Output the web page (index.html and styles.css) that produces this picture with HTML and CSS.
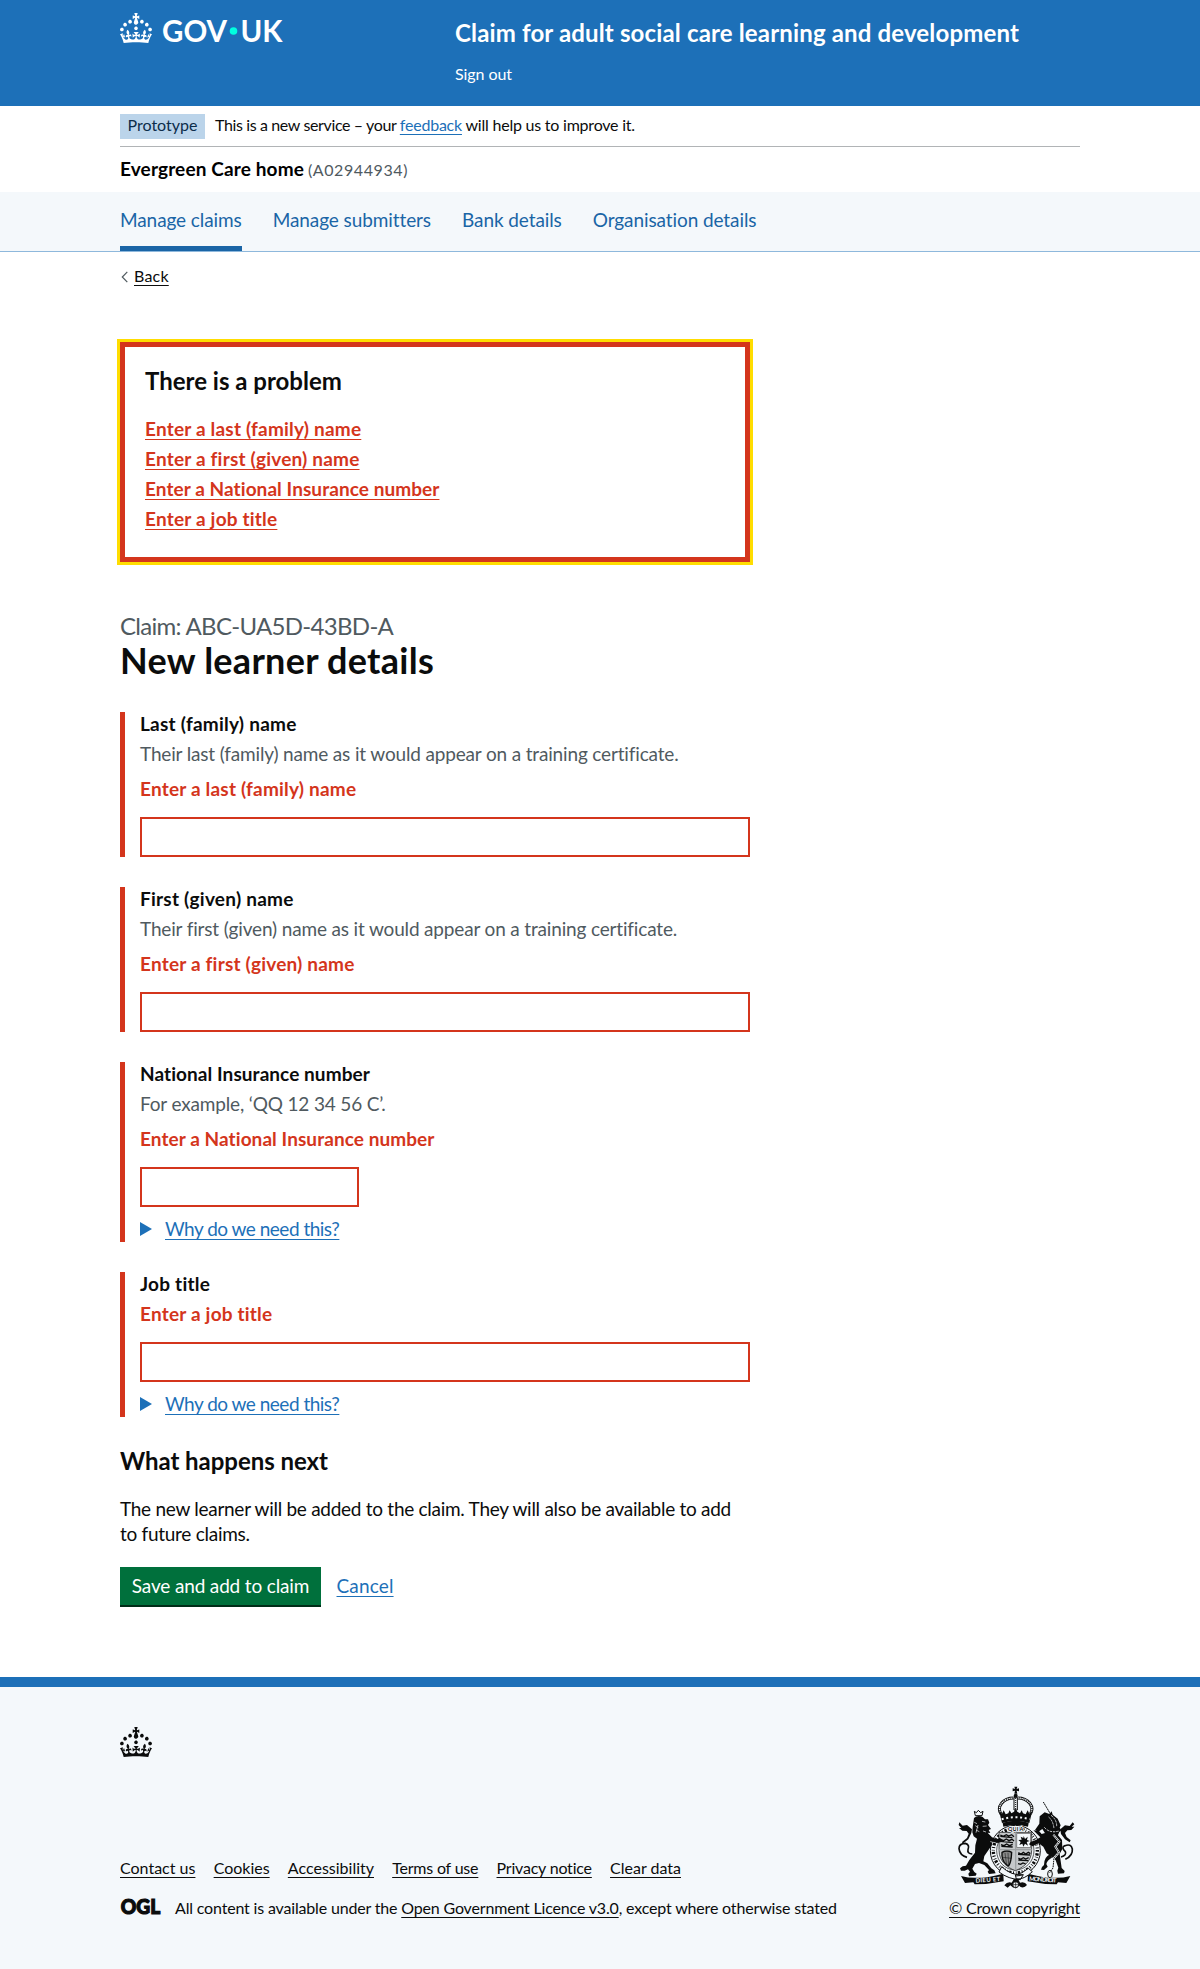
FILE: index.html
```html
<!DOCTYPE html>
<html lang="en">
<head>
<meta charset="utf-8">
<title>New learner details</title>
<link rel="stylesheet" href="styles.css">
</head>
<body>
<svg class="sprite" aria-hidden="true">
  <symbol id="crown" viewBox="0 0 32 30"><path fill-rule="evenodd" d="M22.6 10.4c-1 .4-2-.1-2.4-1-.4-.9.1-2 1-2.4.9-.4 2 .1 2.4 1s-.1 2-1 2.4m-5.9 6.7c-.9.4-2-.1-2.4-1-.4-.9.1-2 1-2.4.9-.4 2 .1 2.4 1s-.1 2-1 2.4m10.8-3.7c-1 .4-2-.1-2.4-1-.4-.9.1-2 1-2.4.9-.4 2 .1 2.4 1s0 2-1 2.4m3.3 4.8c-1 .4-2-.1-2.4-1-.4-.9.1-2 1-2.4.9-.4 2 .1 2.4 1s-.1 2-1 2.4M17 4.7l2.3 1.2V2.5l-2.3.7-.2-.2.9-3h-3.4l.9 3-.2.2c-.1.1-2.3-.7-2.3-.7v3.4L15 4.7c.1.1.1.2.2.2l-1.3 4c-.1.2-.1.4-.1.6 0 1.1.8 2 1.9 2.2h.7c1-.2 1.9-1.1 1.9-2.1 0-.2 0-.4-.1-.6l-1.3-4c-.1-.2 0-.2.1-.3m-7.6 5.7c.9.4 2-.1 2.4-1 .4-.9-.1-2-1-2.4-.9-.4-2 .1-2.4 1s0 2 1 2.4m-5 3c.9.4 2-.1 2.4-1 .4-.9-.1-2-1-2.4-.9-.4-2 .1-2.4 1s.1 2 1 2.4m-3.2 4.8c.9.4 2-.1 2.4-1 .4-.9-.1-2-1-2.4-.9-.4-2 .1-2.4 1s0 2 1 2.4m14.8 11c4.4 0 8.6.3 12.3.8 1.1-4.5 2.4-7 3.7-8.8l-2.5-.9c.2 1.3.3 1.9 0 2.7-.4-.4-.8-1.1-1.1-2.3l-1.2 4c.7-.5 1.3-.8 2-.9-1.1 2.5-2.6 3.1-3.5 3-1.1-.2-1.7-1.2-1.5-2.1.3-1.2 1.5-1.5 2.1-.1 1.1-2.3-.8-3-2-2.3 1.9-1.9 2.1-3.5.6-5.6-2.1 1.6-2.1 3.2-1.2 5.5-1.2-1.4-3.2-.6-2.5 1.6.9-1.4 2.1-.5 1.9.8-.2 1.1-1.7 2.1-3.5 1.9-2.7-.2-2.9-2.1-2.9-3.6.7-.1 1.9.5 2.9 1.9l.4-4.3c-1.1 1.1-2.1 1.4-3.2 1.4.4-1.2 2.1-3 2.1-3h-5.4s1.7 1.9 2.1 3c-1.1 0-2.1-.2-3.2-1.4l.4 4.3c1-1.4 2.2-2 2.9-1.9-.1 1.5-.2 3.4-2.9 3.6-1.9.2-3.4-.8-3.5-1.9-.2-1.3 1-2.2 1.9-.8.7-2.3-1.2-3-2.5-1.6.9-2.2.9-3.9-1.2-5.5-1.5 2-1.3 3.7.6 5.6-1.2-.7-3.1 0-2 2.3.6-1.4 1.8-1.1 2.1.1.2.9-.3 1.9-1.5 2.1-.9.2-2.4-.5-3.5-3 .6 0 1.2.3 2 .9l-1.2-4c-.3 1.1-.7 1.9-1.1 2.3-.3-.8-.2-1.4 0-2.7l-2.9.9C1.3 23 2.6 25.5 3.7 30c3.7-.5 7.9-.8 12.3-.8"/></symbol>
</svg>

<header class="header">
  <div class="container header-row">
    <a class="logo" href="#" aria-label="GOV.UK">
      <svg width="164" height="36" viewBox="0 0 164 36">
        <use href="#crown" width="32" height="30" fill="#fff"/>
        <text class="logo-text" x="42" y="29" textLength="65" lengthAdjust="spacingAndGlyphs">GOV</text>
        <circle cx="113.5" cy="18" r="3.8" fill="#00ffe0"/>
        <text class="logo-text" x="120.5" y="29" textLength="42" lengthAdjust="spacingAndGlyphs">UK</text>
      </svg>
    </a>
    <div class="header-content">
      <a class="service-name" href="#">Claim for adult social care learning and development</a>
      <a class="sign-out" href="#">Sign out</a>
    </div>
  </div>
</header>

<div class="container phase">
  <strong class="tag">Prototype</strong>
  <span class="phase-text"><span class="phase-lead">This is a new service – your </span><a class="link" href="#">feedback</a> will help us to improve it.</span>
</div>
<div class="container org"><strong class="org-name">Evergreen Care home</strong><span class="org-id">(A02944934)</span></div>

<nav class="nav">
  <div class="container nav-list">
    <a class="nav-item nav-current" href="#">Manage claims</a>
    <a class="nav-item" href="#">Manage submitters</a>
    <a class="nav-item" href="#">Bank details</a>
    <a class="nav-item" href="#">Organisation details</a>
  </div>
</nav>

<main class="container main">
  <a class="back" href="#"><svg width="14" height="20" viewBox="0 0 14 20"><path d="M7.3 5.9 2.3 11l5 5.1" fill="none" stroke="#505a5f" stroke-width="1.2"/></svg><span class="back-text">Back</span></a>
  <div class="column">
    <section class="summary">
      <h2 class="heading-m">There is a problem</h2>
      <ul class="summary-list">
        <li><a class="summary-link" href="#last">Enter a last (family) name</a></li>
        <li><a class="summary-link" href="#first">Enter a first (given) name</a></li>
        <li><a class="summary-link tight" href="#ni">Enter a National Insurance number</a></li>
        <li><a class="summary-link" href="#job">Enter a job title</a></li>
      </ul>
    </section>

    <p class="caption">Claim: ABC-UA5D-43BD-A</p>
    <h1 class="heading-l">New learner details</h1>

    <form class="form">
      <div class="group">
        <label class="label" for="last">Last (family) name</label>
        <div class="hint">Their last (family) name as it would appear on a training certificate.</div>
        <p class="error">Enter a last (family) name</p>
        <input class="input" id="last" type="text">
      </div>
      <div class="group">
        <label class="label" for="first">First (given) name</label>
        <div class="hint">Their first (given) name as it would appear on a training certificate.</div>
        <p class="error">Enter a first (given) name</p>
        <input class="input" id="first" type="text">
      </div>
      <div class="group">
        <label class="label tight" for="ni">National Insurance number</label>
        <div class="hint">For example, ‘QQ 12 34 56 C’.</div>
        <p class="error tight">Enter a National Insurance number</p>
        <input class="input input-10" id="ni" type="text">
        <div class="details"><span class="arrow"></span><a class="link details-text" href="#">Why do we need this?</a></div>
      </div>
      <div class="group">
        <label class="label" for="job">Job title</label>
        <p class="error error-after-label">Enter a job title</p>
        <input class="input" id="job" type="text">
        <div class="details"><span class="arrow"></span><a class="link details-text" href="#">Why do we need this?</a></div>
      </div>
      <h2 class="heading-m next-title">What happens next</h2>
      <p class="body">The new learner will be added to the claim. They will also be available to add to future claims.</p>
      <div class="actions">
        <button class="button" type="button">Save and add to claim</button>
        <a class="link cancel" href="#">Cancel</a>
      </div>
    </form>
  </div>
</main>

<footer class="footer">
  <div class="container">
    <svg class="footer-crown" width="32" height="30"><use href="#crown" width="32" height="30"/></svg>
    <div class="footer-row">
      <div class="footer-meta">
        <div class="footer-links">
          <a class="footer-link" href="#">Contact us</a>
          <a class="footer-link" href="#">Cookies</a>
          <a class="footer-link" href="#">Accessibility</a>
          <a class="footer-link narrow" href="#">Terms of use</a>
          <a class="footer-link narrow" href="#">Privacy notice</a>
          <a class="footer-link" href="#">Clear data</a>
        </div>
        <div class="licence">
          <svg class="ogl" width="41" height="18" viewBox="0 0 41 18" aria-label="OGL"><text class="ogl-text" x="0.8" y="16.2" textLength="39.5" lengthAdjust="spacingAndGlyphs">OGL</text></svg>
          <span class="licence-text">All content is available under the <a class="footer-link" href="#">Open Government Licence v3.0</a>, except where otherwise stated</span>
        </div>
      </div>
      <div class="copyright">
        <svg class="arms" width="116" height="103" viewBox="36 18 348 309" aria-hidden="true">
          <!-- royal crown -->
          <path d="M208 20h9l-2 7 7-2v9l-7-2 2 9h-9l2-9-7 2v-9l7 2z"/>
          <circle cx="212" cy="47" r="6"/>
          <path d="M168 102c-14-22 6-48 38-48M256 102c14-22-6-48-38-48" fill="none" stroke="#0b0c0c" stroke-width="9"/>
          <path d="M168 102c-14-22 6-48 38-48M256 102c14-22-6-48-38-48" fill="none" stroke="#f4f8fb" stroke-width="4" stroke-dasharray="4 2"/>
          <path d="M207 52h10v38h-10z" fill="#f4f8fb" stroke="#0b0c0c" stroke-width="3"/>
          <path d="M212 54v34" stroke="#0b0c0c" stroke-width="3" stroke-dasharray="3 3"/>
          <path d="M162 92l9 9 5-10 6 12 8-3 4-9 5 9 8-5 5-9 5 9 8 5 5-9 4 9 8 3 6-12 5 10 9-9-9 37q-41-12-82 0z"/>
          <path d="M170 118q42-13 84 0" fill="none" stroke="#f4f8fb" stroke-width="6" stroke-dasharray="6 8"/>
          <path d="M173 128q39-12 78 0l-2 12q-37-10-74 0z"/>
          <!-- garter and quartered shield -->
          <ellipse cx="211" cy="212" rx="75" ry="76" fill="#f4f8fb" stroke="#0b0c0c" stroke-width="3"/>
          <ellipse cx="211" cy="212" rx="66" ry="67" fill="none" stroke="#0b0c0c" stroke-width="10" stroke-dasharray="3 5 7 4 2 6"/>
          <ellipse cx="211" cy="212" rx="56" ry="58" fill="#f4f8fb" stroke="#0b0c0c" stroke-width="2"/>
          <path d="M162 157h98v54c0 34-26 52-49 61-23-9-49-27-49-61z" fill="#c5c8ca" stroke="#0b0c0c" stroke-width="2"/>
          <path d="M215 160h42v43h-42z" fill="#f4f8fb" stroke="#777" stroke-width="3"/>
          <path d="M166 165l9 4 9-5 7 4 9-4 7 6M166 169l36 4M168 179l8 3 8-5 8 5 9-4 6 5M167 184l37 4M168 194l9 3 8-5 8 5 10-4M169 199l34 2M220 218l8 5 7-6 7 5 8-5 6 4M219 223l36 2M220 234l7 4 8-5 7 4 9-4M220 240l30 2M219 251l8 2 7-4 8 3" fill="none" stroke="#0b0c0c" stroke-width="4"/>
          <path d="M236 168l4 9 8-7-2 10 8 3-9 3 4 11-9-6-5 9-3-9-9 4 4-9-7-6 10-1-3-9 8 4z"/>
          <path d="M171 217q15-8 29 0-1 29-9 41-17-8-20-30z" fill="#888" stroke="#0b0c0c" stroke-width="4"/>
          <path d="M180 219l5 37M189 218l2 38M173 232l26 3" stroke="#0b0c0c" stroke-width="1.5"/>
          <path d="M212 157v112M162 209h98" stroke="#9ea2a4" stroke-width="4"/>
          <!-- lion -->
          <path d="M88 94l6 4 6-7 7 7 7-4-3 13H91z" fill="none" stroke="#0b0c0c" stroke-width="3"/>
          <path d="M87 114q11-10 26-3l7 7 9 0 4 10-4 7 9 12-7 3 5 9-8-1 13 14 15 6 8-5 8 6-3 7-13 3-20-6 5 12-9 13-14 20-3 16 12 6 12 15 9 6 4 9-20 2-4-7 4-5-14-15-16-6-12 3-8 14 6 10 7 5-3 6-20 2-2-8 5-6-6-7-10 4-11 0-3-7 8-6 10-2 10-17 17-22 1-22 5-20-10-7-4-12 1-15z"/>
          <path d="M88 127l8 4M91 137l9 6M93 150l10 5M111 124l10 2M113 139l12-1M114 153l9 3M99 135l-6 23" stroke="#f4f8fb" stroke-width="2"/>
          <path d="M82 226q-16-1-13-13 6-15-8-19-19 0-19 16 2 20 24 26" fill="none" stroke="#0b0c0c" stroke-width="5" transform="translate(0 -4)"/>
          <path d="M43 127l10 10 13-2 15 13-2 11-9 19-17 13-2-5 15-12 5-13-6-8-13-1-10-8 7 0-8-9z"/>
          <!-- unicorn -->
          <path d="M295 66l22 37" stroke="#0b0c0c" stroke-width="3" stroke-dasharray="5 1"/>
          <path d="M284 109l15-12 14 5 7-8 3 10 15 12 9 20-3 7 5 8-6 5-7 16-16-7-15 2-13-20-12 8-10-5 13-19z"/>
          <path d="M318 106q18 13 17 35M311 111q14 12 16 36M298 142q16 19 44 11" fill="none" stroke="#f4f8fb" stroke-width="2.5" stroke-dasharray="7 3"/>
          <path d="M265 151l17 2 8 9 20-6 26 6 15 18 1 27-8 15 2 14 4 28 9 9-2 7-18 1-2-9 3-9-8-22-12-11-15-10-10-20-14-10-18 9-11-6 5-7 17-7 12-7z"/>
          <path d="M322 232q-16 10-18 20l4 8-11 10-9-1 3-8 6-6q0-24 18-32z"/>
          <path d="M325 164l18 21-12 15 11 17-15 17-3 30-10 14" fill="none" stroke="#f4f8fb" stroke-width="6"/>
          <path d="M325 164l18 21-12 15 11 17-15 17-3 30-10 14" fill="none" stroke="#0b0c0c" stroke-width="3" stroke-dasharray="5 2"/>
          <ellipse cx="315" cy="282" rx="7" ry="11" fill="none" stroke="#0b0c0c" stroke-width="3"/>
          <path d="M348 231q18-5 13-16-14-14-1-18 18-7 22 10 2 20-21 31" fill="none" stroke="#0b0c0c" stroke-width="5"/>
          <path d="M383 127l-9 11-14-2-14 12 2 14 12 16 14 9 3-6-12-10-5-12 7-8 12-1 9-10-8 0 8-7z"/>
          <!-- motto ribbons -->
          <path d="M48 288q50 14 127-7l1 23q-43 9-87 9l-4-6-25 2z"/>
          <path d="M376 288q-50 14-127-7l-1 23q43 9 87 9l4-6 25 2z"/>
          <text class="motto" x="92" y="308" textLength="74" transform="rotate(-4 92 308)">DIEU ET</text>
          <text class="motto" x="252" y="302" textLength="82" transform="rotate(4 252 302)">MON DROIT</text>
          <path d="M170 260q29 28 65 24l-9 15q-35-1-64-23zM250 265q-18 16-39 20l3 12q24 2 48-22z" fill="#f4f8fb" stroke="#0b0c0c" stroke-width="3"/>
          <path d="M178 316q9-12 22-8l7-12h12l6 12q15-4 21 7-8 10-19 6l-7-6-15 8-9-7-8 7z"/>
          <circle cx="212" cy="314" r="9" fill="#f4f8fb" stroke="#0b0c0c" stroke-width="3"/>
          <path d="M212 304v21M203 314h18" stroke="#0b0c0c" stroke-width="2"/>
          <text class="garter" x="189" y="152" textLength="46">QUI A</text>
        </svg>
        <a class="footer-link crown-copyright" href="#">© Crown copyright</a>
      </div>
    </div>
  </div>
</footer>
</body>
</html>
```
FILE: styles.css
```css
* { box-sizing: border-box; }
body {
  margin: 0;
  background: #fff;
  color: #0b0c0c;
  font-family: Lato, "Liberation Sans", sans-serif;
  font-size: 19px;
  line-height: 25px;
}
h1, h2, p, ul { margin: 0; padding: 0; }
ul { list-style: none; }
a { color: inherit; text-decoration: none; }
.sprite { display: none; }
svg { display: block; flex: none; overflow: visible; }
.container { width: 960px; margin: 0 auto; }
.link, .back-text, .footer-link, .summary-link {
  text-decoration: underline;
  text-decoration-thickness: 1px;
  text-underline-offset: 3px;
}
.link { color: #1d70b8; }

.header { height: 106px; background: #1d70b8; color: #fff; }
.header-row { display: flex; }
.logo { width: 335px; padding-top: 13px; }
.logo-text { font-size: 30.5px; font-weight: 700; fill: #fff; }
.header-content { display: flex; flex-direction: column; gap: 16px; padding-top: 18px; }
.service-name { font-size: 24px; line-height: 30px; font-weight: 700; letter-spacing: .154px; }
.sign-out { font-size: 16px; line-height: 20px; letter-spacing: -.06px; }

.phase {
  display: flex;
  gap: 10px;
  height: 41px;
  padding-top: 8px;
  border-bottom: 1px solid #b1b4b6;
  font-size: 16px;
  line-height: 22px;
}
.tag {
  width: 85px;
  height: 25px;
  background: #bbd4ea;
  color: #0c2d4a;
  font-weight: 400;
  text-align: center;
}
.phase-text { letter-spacing: -.22px; }
.phase-lead { letter-spacing: -.37px; }
.org { display: flex; align-items: baseline; height: 45px; padding-top: 9px; gap: 4px; color: #000; }
.org-name { letter-spacing: .137px; }
.org-id { font-size: 16px; color: #505a5f; letter-spacing: .58px; }

.nav { height: 60px; background: #f4f8fb; border-bottom: 1px solid #8eb8dc; color: #1a65a6; }
.nav-list { display: flex; gap: 31px; }
.nav-item { height: 59px; padding-top: 15px; letter-spacing: -.09px; }
.nav-current { border-bottom: 5px solid #1a65a6; }

.main { padding-top: 14px; }
.back { display: flex; height: 20px; font-size: 16px; line-height: 20px; letter-spacing: .2px; }
.column { width: 630px; }
.heading-m { font-size: 24px; line-height: 30px; font-weight: 700; }
.summary {
  height: 220px;
  margin-top: 56px;
  padding: 19px 20px 0;
  border: 5px solid #d4351c;
  outline: 3px solid #fd0;
}
.summary-list { display: flex; flex-direction: column; gap: 5px; margin-top: 20px; }
.summary-link { color: #d4351c; font-weight: 700; letter-spacing: .2px; }
.caption { margin-top: 49px; font-size: 24px; line-height: 30px; color: #505a5f; letter-spacing: -.7px; }
.heading-l { margin-top: -1px; font-size: 36px; line-height: 40px; letter-spacing: .27px; }

.form { display: flex; flex-direction: column; margin-top: 32px; }
.group {
  display: flex;
  flex-direction: column;
  align-items: flex-start;
  margin-bottom: 30px;
  padding-left: 15px;
  border-left: 5px solid #d4351c;
}
.label { margin-top: -1px; font-weight: 700; letter-spacing: .24px; }
.hint { margin-top: 5px; color: #505a5f; letter-spacing: -.16px; }
.error { margin-top: 10px; color: #d4351c; font-weight: 700; letter-spacing: .2px; }
.error-after-label { margin-top: 5px; }
.summary-link.tight, .label.tight, .error.tight { letter-spacing: .07px; }
.input { width: 100%; height: 40px; margin: 16px 0 0; border: 2px solid #d4351c; border-radius: 0; background: #fff; }
.input-10 { width: 219px; }
.details { display: flex; margin: 9px 0 1px; gap: 13px; }
.arrow { width: 12px; height: 14px; margin-top: 6px; background: #1d70b8; clip-path: polygon(0 0, 100% 50%, 0 100%); }
.details-text { letter-spacing: -.5px; }
.next-title { margin-top: -1px; letter-spacing: -.05px; }
.body { margin-top: 20px; letter-spacing: -.277px; }
.actions { display: flex; gap: 15.5px; margin-top: 21px; }
.button {
  width: 201px;
  height: 38px;
  margin: 0 0 2px;
  padding: 6px 0 7px;
  border: 0;
  background: #00703c;
  box-shadow: 0 2px 0 #002d18;
  color: #fff;
  font: inherit;
  letter-spacing: -.15px;
}
.cancel { padding-top: 6px; letter-spacing: .15px; }

.footer {
  height: 292px;
  margin-top: 70px;
  padding-top: 40px;
  border-top: 10px solid #1d70b8;
  background: #f4f8fb;
  font-size: 16px;
  line-height: 20px;
}
.footer-crown { fill: #0b0c0c; }
.footer-row { display: flex; justify-content: space-between; align-items: flex-end; margin-top: 29px; }
.footer-links { display: flex; gap: 18.2px; }
.narrow { letter-spacing: -.2px; }
.licence { display: flex; gap: 14px; margin-top: 20px; }
.licence-text { letter-spacing: -.17px; }
.ogl-text { font-size: 21px; font-weight: 900; fill: #0b0c0c; stroke: #0b0c0c; stroke-width: 1.2px; }
.copyright { display: flex; flex-direction: column; align-items: center; }
.arms { margin-bottom: 9px; fill: #0b0c0c; }
.crown-copyright { letter-spacing: -.19px; }
.motto { font-size: 18px; font-weight: 700; fill: #f4f8fb; }
.garter { font-size: 17px; font-weight: 700; fill: #0b0c0c; stroke: #f4f8fb; stroke-width: 5px; paint-order: stroke; }
```
